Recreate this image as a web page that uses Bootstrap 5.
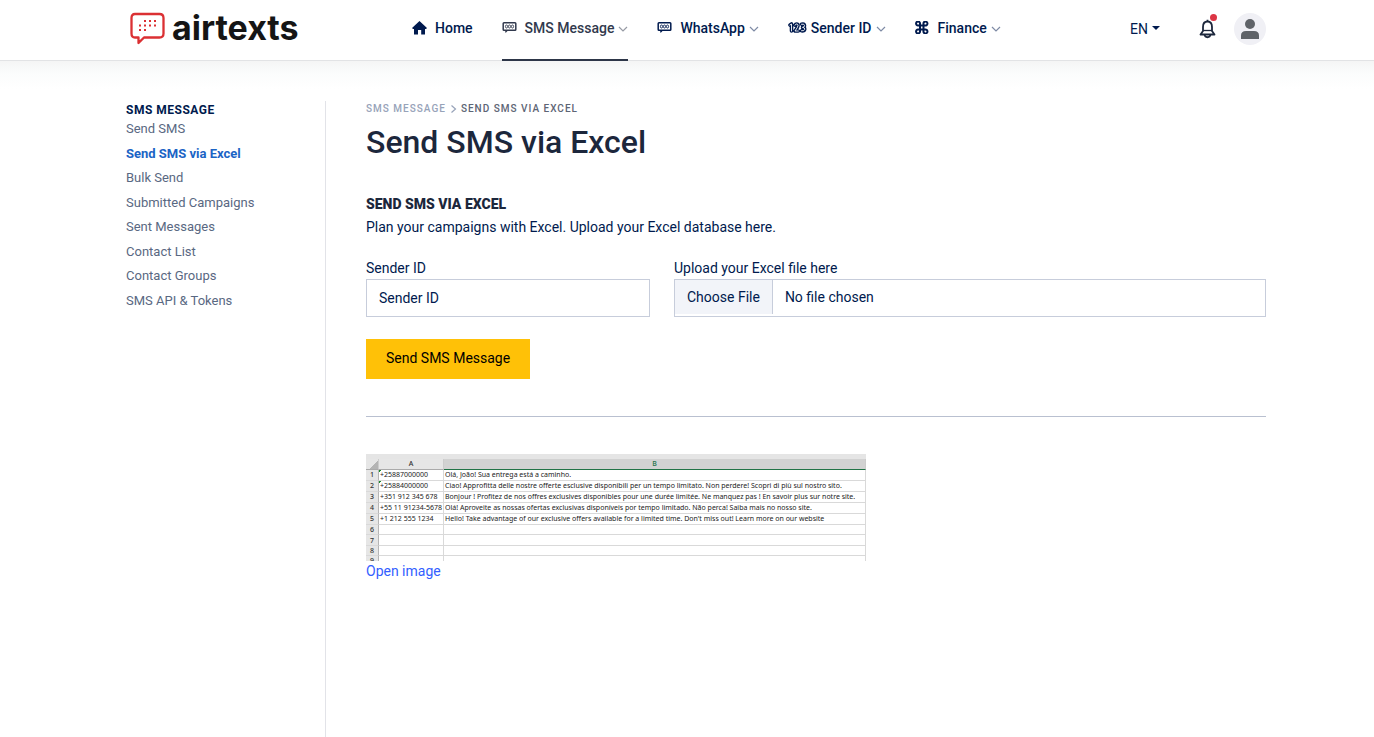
<!DOCTYPE html>
<html lang="en">
<head>
<meta charset="utf-8">
<meta name="viewport" content="width=device-width, initial-scale=1">
<title>Send SMS via Excel - airtexts</title>
<link href="https://cdn.jsdelivr.net/npm/bootstrap@5.3.0/dist/css/bootstrap.min.css" rel="stylesheet">
<style>
:root{--navy:#001a4e;--ink:#1c273c;--slate:#596882;--rule:#c7cddb}
body{font-family:Roboto,"Liberation Sans",sans-serif;font-size:14px;line-height:20px;color:var(--navy);background:#fff}
.shell{width:100%;max-width:1158px;margin:0 auto;padding-left:18px}
.topbar{border-bottom:1px solid #e2e3e5}
.topbar .shell{height:60px}
.below-bar{background:linear-gradient(#f5f5f5,#fbfcfc 12px,#fff 28px)}
.page-body{padding-top:40px}
.logo{width:286px;padding-left:4px;padding-bottom:4px;gap:7px;color:#151515;text-decoration:none;font:700 34px/40px Inter,sans-serif}
.mainmenu{gap:29px}
.mainmenu a{height:61px;margin-bottom:-1px;padding-top:2px;padding-bottom:6px;border-bottom:2px solid transparent;color:var(--navy);font-weight:500;text-decoration:none}
.mainmenu a.current{color:#31394d;border-color:#2d3648}
.mainmenu .chev{margin-left:4px;margin-top:2px;opacity:.5}
.lang{border:0;background:none;padding:0;color:var(--navy);margin-right:39px}
.lang::after{margin-left:4px}
.tools{padding-bottom:2px}
.bell{border:0;background:none;padding:0;margin-right:18px;color:var(--ink)}
.bell .dot{width:7px;height:7px;background:#dc3545;top:-5px;right:-1px}
.person{width:32px;height:32px;border:0;padding:0;background:#f0f0f5}
.side{width:200px;border-right:1px solid #e2e3e8;font-size:13px}
.side h2{font-size:12px;line-height:18px;font-weight:700;letter-spacing:.5px;margin:0}
.side a{display:block;line-height:1.5;margin-bottom:5px;color:var(--slate);text-decoration:none}
.side a.current{color:#1b64c5;font-weight:700}
.content{padding-left:40px;min-width:0}
.crumbs{font-size:10px;line-height:16px;font-weight:500;letter-spacing:1px;gap:4px;color:#5d6575}
.crumbs a{color:#97a3b9;text-decoration:none}
h1{font-size:32px;line-height:40px;font-weight:500;color:var(--ink);margin:5px 0 32px}
.content h2{font-size:14px;line-height:20px;font-weight:900;color:var(--ink);margin:0 0 3px}
.upload{margin-top:21px}
.form-label{display:block;margin:0 0 1px}
.form-control,.form-control:focus{height:38px;border:1px solid var(--rule);border-radius:0;font-size:14px;line-height:20px;padding:8px 12px;color:var(--navy)}
.form-control::placeholder{color:var(--navy);opacity:1}
.form-control::file-selector-button,.form-control:hover:not(:disabled):not([readonly])::file-selector-button{background:#f2f4f9;color:var(--navy);padding:7px 12px;margin:-8px 12px 0 -12px;border:0 solid var(--rule);border-right-width:1px;height:34px}
.form-control[type=file]{line-height:18px}
.send{border:0;border-radius:0;background:#ffc107;color:#000;font-size:14px;padding:9px 20px 11px;line-height:20px;margin-top:22px}
.send:hover{background:#ffca2c}
.parting{border-top:1px solid #b9c0d0;opacity:1;margin:37px 0}
.sheet{max-width:500px;overflow:hidden;border-top:5px solid #e5e5e5}
.sheet table{width:500px;table-layout:fixed;border-collapse:separate;border-spacing:0;font-family:"Noto Sans",sans-serif;font-size:7px;line-height:10px;color:#222}
.sheet th,.sheet td{padding:0;height:11px;white-space:nowrap;border:0 solid #d9d9d9;border-width:0 1px 1px 0}
.sheet td{padding-left:1px}
.sheet th{background:#e6e6e6;color:#333;font-weight:500;text-align:center;border-right-color:#b5b5b5}
.sheet thead th{height:11px;border-bottom-color:#aaa;border-right-color:#ccc}
.sheet thead .picked{background:#d2d2d2;color:#217346;border-bottom-color:#217346}
.sheet .corner{background:linear-gradient(135deg,#e6e6e6 60%,#b4b4b4 60%)}
.sheet .blank th,.sheet .blank td{height:10px;line-height:9px}
.sheet .blank .tall{height:11px}
.sheet .cut th,.sheet .cut td{height:5px;line-height:9px;border-bottom:0}
.sheet .cut div{height:5px;overflow:hidden}
.sheet .flagged{background:linear-gradient(135deg,#168a25 2px,transparent 2px)}
.open-link{color:#335eff;text-decoration:none}
</style>
</head>
<body class="d-flex flex-column min-vh-100">
<svg class="d-none" aria-hidden="true">
  <symbol id="chat" viewBox="0 0 15 13"><path d="M2 1.700h11q.8 0 .8.800v6q0 .8-.8.8H2q-.8 0-.8-.8v-6q0-.8.8-.8z" fill="none" stroke="currentColor" stroke-width="1.500"/><path d="M3 9.500h3L3.600 12z" fill="currentColor"/><g fill="none" stroke="currentColor" stroke-width=".9"><ellipse cx="4.500" cy="5.500" rx="1.100" ry="1.500"/><ellipse cx="7.500" cy="5.500" rx="1.100" ry="1.500"/><ellipse cx="10.500" cy="5.500" rx="1.100" ry="1.500"/></g></symbol>
  <symbol id="chev" viewBox="0 0 10 8"><path d="M1 2l4 4 4-4" fill="none" stroke="currentColor" stroke-width="1.200"/></symbol>
</svg>
<header class="topbar">
  <div class="shell d-flex align-items-center">
    <a href="#" class="logo d-flex align-items-center flex-shrink-0">
      <svg width="35" height="33" viewBox="0 0 35 33" aria-hidden="true"><path d="M5 2h24.500q4 0 4 4v15.500q0 4-4 4H14L8.500 31v-5.500H5q-3.500 0-3.500-4V6q0-4 3.500-4z" fill="none" stroke="#db3033" stroke-width="2.300" stroke-linejoin="round"/><g fill="#db3033"><path d="M14 8h2v2h-2zM19 8h2v2h-2zM24 8h2v2h-2zM9 12.500h2v2H9zM14 12.500h2v2h-2zM19 12.500h2v2h-2zM24 12.500h2v2h-2zM9 17h2v2H9zM14 17h2v2h-2z"/></g></svg>
      <span>airtexts</span>
    </a>
    <nav class="mainmenu d-flex flex-shrink-0" aria-label="Main">
      <a href="#" class="d-flex align-items-center"><svg class="me-2" width="15" height="14" viewBox="0 0 15 14" aria-hidden="true"><path d="M7.500 0L15 7l-1 1h-1v5.500H9.200V9H6v4.500H2V8H1L0 7z" fill="currentColor"/></svg>Home</a>
      <a href="#" class="current d-flex align-items-center"><svg class="me-2" width="15" height="13" aria-hidden="true"><use href="#chat"/></svg>SMS Message<svg class="chev" width="10" height="8" aria-hidden="true"><use href="#chev"/></svg></a>
      <a href="#" class="d-flex align-items-center"><svg class="me-2" width="15" height="13" aria-hidden="true"><use href="#chat"/></svg>WhatsApp<svg class="chev" width="10" height="8" aria-hidden="true"><use href="#chev"/></svg></a>
      <a href="#" class="d-flex align-items-center"><svg class="me-1" width="19" height="13" viewBox="0 0 19 13" fill="none" stroke-linejoin="round" stroke-linecap="round" aria-hidden="true"><path d="M2 4L3.500 3v7M7 4.200Q7.500 3 8.700 3t1.300 1.500Q10 6 7 10h3.300M13.500 3.200q3-.7 3 1.300T14.500 6.400q2.400 0 2.200 1.900T13.500 9.800" stroke="currentColor" stroke-width="3.600"/><path d="M2 4L3.500 3v7M7 4.200Q7.500 3 8.700 3t1.300 1.500Q10 6 7 10h3.300M13.500 3.200q3-.7 3 1.300T14.500 6.400q2.400 0 2.200 1.900T13.500 9.800" stroke="#fff" stroke-width=".9"/></svg>Sender ID<svg class="chev" width="10" height="8" aria-hidden="true"><use href="#chev"/></svg></a>
      <a href="#" class="d-flex align-items-center"><svg class="me-2" width="15" height="13" viewBox="0 0 15 13" aria-hidden="true"><path d="M5 4.500V3a2 2 0 1 0-2 1.500h7A2 2 0 1 0 8.500 3v7a2 2 0 1 0 1.500-1.500H3A2 2 0 1 0 5 10V4.500" fill="none" stroke="currentColor" stroke-width="2"/></svg>Finance<svg class="chev" width="10" height="8" aria-hidden="true"><use href="#chev"/></svg></a>
    </nav>
    <div class="tools d-flex align-items-center ms-auto">
      <div class="dropdown d-flex"><button type="button" class="lang dropdown-toggle" data-bs-toggle="dropdown">EN</button><ul class="dropdown-menu"><li><a class="dropdown-item" href="#">EN</a></li></ul></div>
      <button type="button" class="bell position-relative d-flex" aria-label="Notifications"><svg width="17" height="20" viewBox="0 0 17 20" fill="none" stroke="currentColor" stroke-width="1.800" stroke-linejoin="round"><path d="M8.500 2.500C5 2.500 4 5 4 8v4L1.500 15.500h14L13 12V8c0-3-1-5.500-4.500-5.500zM8.500 2.500V.7"/><path d="M4 11.500h9" stroke-width="1.300"/><path d="M5.700 16c.3 3 5.300 3 5.600 0"/></svg><span class="dot position-absolute rounded-circle"></span></button>
      <button type="button" class="person rounded-circle d-flex align-items-center justify-content-center" aria-label="Account"><svg width="18" height="20" viewBox="0 0 18 20" fill="#5f6368"><circle cx="9" cy="5" r="5"/><path d="M0 20v-3.500Q0 12 5 12h8q5 0 5 4.500V20z"/></svg></button>
    </div>
  </div>
</header>
<div class="below-bar flex-grow-1 d-flex flex-column">
  <div class="shell page-body d-flex flex-grow-1">
    <aside class="side flex-shrink-0">
      <h2>SMS MESSAGE</h2>
      <nav aria-label="SMS Message">
        <a href="#">Send SMS</a>
        <a href="#" class="current">Send SMS via Excel</a>
        <a href="#">Bulk Send</a>
        <a href="#">Submitted Campaigns</a>
        <a href="#">Sent Messages</a>
        <a href="#">Contact List</a>
        <a href="#">Contact Groups</a>
        <a href="#">SMS API &amp; Tokens</a>
      </nav>
    </aside>
    <main class="content flex-grow-1">
      <nav class="crumbs d-flex align-items-center" aria-label="Breadcrumb"><a href="#">SMS MESSAGE</a><svg width="7" height="8" viewBox="0 0 7 8" aria-hidden="true"><path d="M1.500 0.500l4 3.500-4 3.500" fill="none" stroke="#97a3b9" stroke-width="1.200"/></svg><span>SEND SMS VIA EXCEL</span></nav>
      <h1>Send SMS via Excel</h1>
      <h2>SEND SMS VIA EXCEL</h2>
      <p class="mb-0">Plan your campaigns with Excel. Upload your Excel database here.</p>
      <form class="upload">
        <div class="row">
          <div class="col-4"><label class="form-label" for="sender">Sender ID</label><input class="form-control" id="sender" type="text" placeholder="Sender ID"></div>
          <div class="col-8"><label class="form-label" for="excel">Upload your Excel file here</label><input class="form-control" id="excel" type="file"></div>
        </div>
        <button type="button" class="send btn">Send SMS Message</button>
      </form>
      <hr class="parting">
      <div class="sheet">
        <table>
          <colgroup><col width="13"><col width="65"><col></colgroup>
          <thead><tr><th class="corner"></th><th>A</th><th class="picked">B</th></tr></thead>
          <tbody>
            <tr><th>1</th><td class="flagged">+25887000000</td><td>Olá, João! Sua entrega está a caminho.</td></tr>
            <tr><th>2</th><td class="flagged">+25884000000</td><td>Ciao! Approfitta delle nostre offerte esclusive disponibili per un tempo limitato. Non perdere! Scopri di più sul nostro sito.</td></tr>
            <tr><th>3</th><td>+351 912 345 678</td><td>Bonjour ! Profitez de nos offres exclusives disponibles pour une durée limitée. Ne manquez pas ! En savoir plus sur notre site.</td></tr>
            <tr><th>4</th><td>+55 11 91234-5678</td><td>Olá! Aproveite as nossas ofertas exclusivas disponíveis por tempo limitado. Não perca! Saiba mais no nosso site.</td></tr>
            <tr><th>5</th><td>+1 212 555 1234</td><td>Hello! Take advantage of our exclusive offers available for a limited time. Don't miss out! Learn more on our website</td></tr>
            <tr class="blank"><th>6</th><td></td><td></td></tr>
            <tr class="blank"><th class="tall">7</th><td></td><td></td></tr>
            <tr class="blank"><th>8</th><td></td><td></td></tr>
            <tr class="cut"><th><div>9</div></th><td></td><td></td></tr>
          </tbody>
        </table>
      </div>
      <a class="open-link" href="#">Open image</a>
    </main>
  </div>
</div>
<script src="https://cdn.jsdelivr.net/npm/bootstrap@5.3.0/dist/js/bootstrap.bundle.min.js"></script>
</body>
</html>
